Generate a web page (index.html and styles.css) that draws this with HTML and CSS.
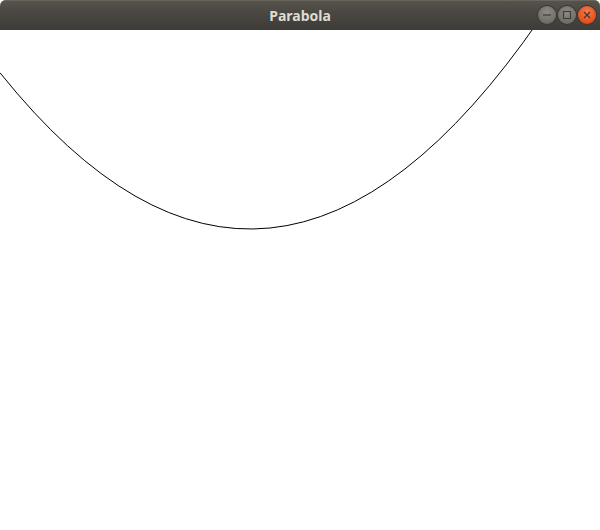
FILE: index.html
```html
<!DOCTYPE html>
<html>
<head>
<meta charset="utf-8">
<link rel="stylesheet" href="styles.css">
</head>
<body>
<div class="window">
  <header class="titlebar">
    <span class="title">Parabola</span>
    <div class="controls">
      <span class="btn btn-min"><svg width="18" height="18" viewBox="0 0 18 18"><line x1="5" y1="9" x2="13" y2="9" stroke="#3c3b37" stroke-width="1.2"/></svg></span>
      <span class="btn btn-max"><svg width="18" height="18" viewBox="0 0 18 18"><rect x="5.5" y="5.5" width="7" height="7" fill="none" stroke="#3c3b37" stroke-width="1.1"/></svg></span>
      <span class="btn btn-close"><svg width="18" height="18" viewBox="0 0 18 18"><path d="M6 6 L12 12 M12 6 L6 12" stroke="#3c3b37" stroke-width="1.3"/></svg></span>
    </div>
  </header>
  <main class="canvas">
    <svg width="600" height="500" viewBox="0 0 600 500">
      <path d="M0 42.75 Q270 380.25 540 -11.25" fill="none" stroke="#000" stroke-width="1"/>
    </svg>
  </main>
</div>
</body>
</html>
```
FILE: styles.css
```css
html, body {
  margin: 0;
  padding: 0;
  background: #ffffff;
}
.window {
  width: 600px;
  height: 530px;
  display: flex;
  flex-direction: column;
  overflow: hidden;
}
.titlebar {
  position: relative;
  height: 30px;
  flex: 0 0 30px;
  background: linear-gradient(#57534c 0%, #4b4843 40%, #3e3c38 100%);
  border-radius: 6px 6px 0 0;
  box-shadow: inset 0 1px 0 #6a665e;
  display: flex;
  align-items: center;
  justify-content: center;
}
.title {
  font-family: "Noto Sans", "DejaVu Sans", sans-serif;
  font-weight: bold;
  font-size: 14px;
  color: #dfdbd2;
  margin-top: 1px;
}
.controls {
  position: absolute;
  right: 4px;
  top: 6px;
  display: flex;
  gap: 2px;
}
.btn {
  width: 18px;
  height: 18px;
  border-radius: 50%;
  display: block;
}
.btn svg { display: block; }
.btn-min, .btn-max {
  background: radial-gradient(circle at 50% 35%, #8d8a84 0%, #75726c 60%, #5f5c57 100%);
  box-shadow: 0 0 0 1px #3a3834;
}
.btn-close {
  background: radial-gradient(circle at 50% 35%, #f57c4f 0%, #e9541f 60%, #c9441a 100%);
  box-shadow: 0 0 0 1px #3a3834;
}
.canvas {
  flex: 1;
  background: #ffffff;
}
.canvas svg { display: block; }
```
